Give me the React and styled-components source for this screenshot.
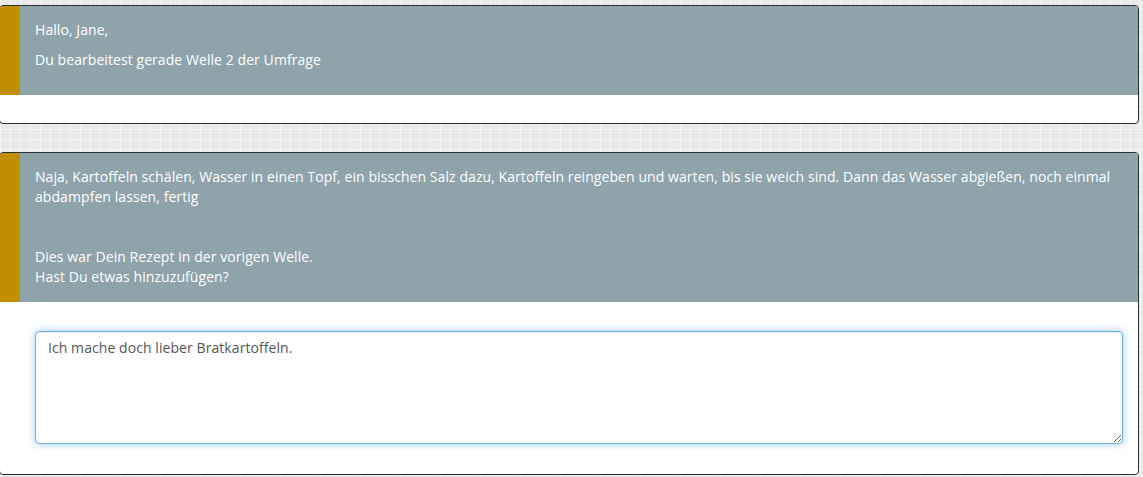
import React from 'react';
import styled, { createGlobalStyle } from 'styled-components';

const GlobalStyle = createGlobalStyle`
  html, body {
    margin: 0;
    padding: 0;
  }
  body {
    font-family: "Open Sans", "Noto Sans", sans-serif;
    font-size: 14px;
    line-height: 20px;
    letter-spacing: 0.07px;
    color: #333;
    background-color: #e9e9e9;
    background-image:
      linear-gradient(90deg, rgba(255,255,255,0.55) 1px, transparent 1px),
      linear-gradient(0deg, rgba(255,255,255,0.55) 1px, transparent 1px);
    background-size: 10px 10px;
    min-height: 477px;
    overflow: hidden;
  }
`;

const Page = styled.div`
  padding-top: 5px;
  margin-left: -1px;
  width: 1140px;
  display: flex;
  flex-direction: column;
  gap: 28px;
`;

const Card = styled.section`
  background: #fff;
  border: 1px solid #2b3035;
  border-radius: 4px;
  overflow: hidden;
`;

const Header = styled.div`
  background: #8fa3ab;
  border-left: 20px solid #c08e00;
  padding: 14px 15px ${(p) => p.$bottom || 15}px;
  color: #fff;

  p {
    margin: 0 0 10px;
  }
  p:last-child {
    margin-bottom: 0;
  }
`;

const Footer = styled.div`
  height: 28px;
`;

const Body = styled.div`
  padding: 29px 15px 30px 35px;
`;

const TextArea = styled.textarea`
  display: block;
  box-sizing: border-box;
  width: 100%;
  height: 113px;
  margin: 0;
  padding: 6px 12px;
  font-family: "Open Sans", "Noto Sans", sans-serif;
  font-size: 14px;
  line-height: 20px;
  letter-spacing: 0.07px;
  color: #555;
  background: #fff;
  border: 1px solid #66afe9;
  border-radius: 4px;
  outline: 0;
  box-shadow: inset 0 1px 1px rgba(0,0,0,.075), 0 0 8px rgba(102,175,233,.6);
  resize: vertical;
`;

export default function App() {
  return (
    <>
      <GlobalStyle />
      <Page>
        <Card>
          <Header $bottom={25}>
            <p>Hallo, Jane,</p>
            <p>Du bearbeitest gerade Welle 2 der Umfrage</p>
          </Header>
          <Footer />
        </Card>
        <Card>
          <Header>
            <p>
              Naja, Kartoffeln schälen, Wasser in einen Topf, ein bisschen Salz dazu, Kartoffeln reingeben und warten, bis sie weich sind. Dann das Wasser abgießen, noch einmal abdampfen lassen, fertig
            </p>
            <p>&nbsp;</p>
            <p>
              Dies war Dein Rezept in der vorigen Welle.
              <br />
              Hast Du etwas hinzuzufügen?
            </p>
          </Header>
          <Body>
            <TextArea defaultValue="Ich mache doch lieber Bratkartoffeln." />
          </Body>
        </Card>
      </Page>
    </>
  );
}
